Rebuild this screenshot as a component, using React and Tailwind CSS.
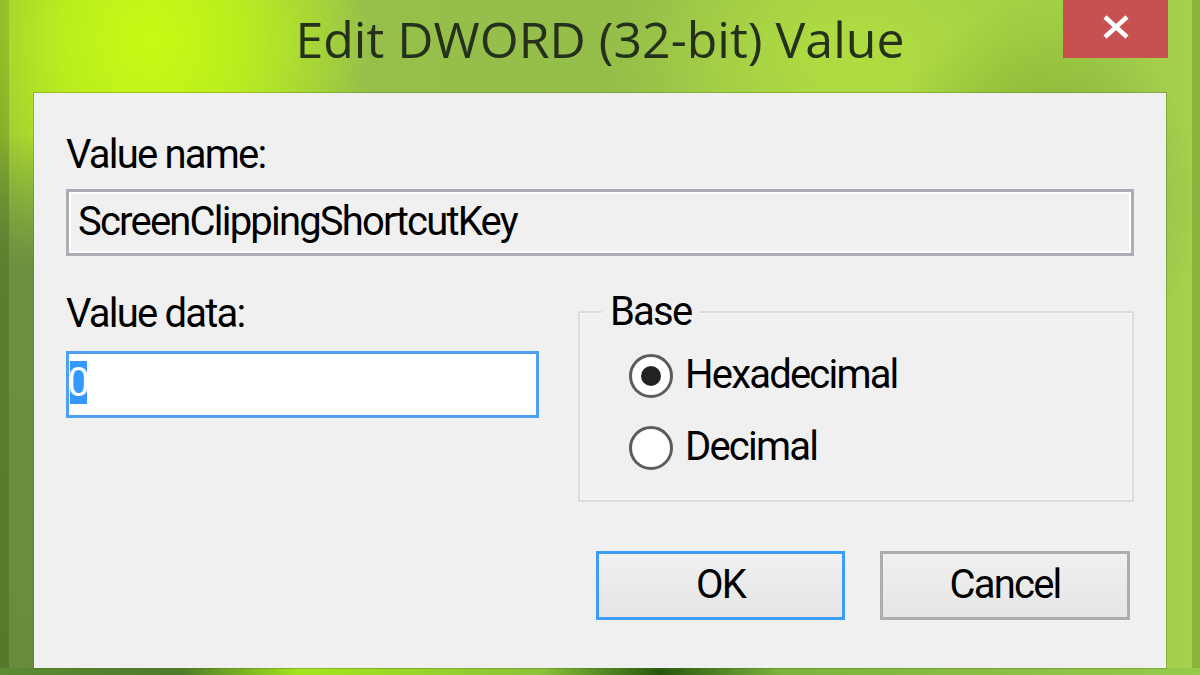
export default function App() {
  const titleFont = { fontFamily: '"Open Sans", "Noto Sans", sans-serif' };
  const bodyFont = { fontFamily: 'Roboto, "Noto Sans", sans-serif' };
  return (
    <div className="relative w-[1200px] h-[675px] overflow-hidden flex flex-col bg-[#9cc648]">
      {/* background layers */}
      <div className="absolute inset-0 bg-[radial-gradient(ellipse_220px_260px_at_150px_40px,#c8fa14_0%,#bdf01c_35%,rgba(160,210,60,0)_100%),radial-gradient(ellipse_160px_200px_at_1040px_200px,rgba(110,150,40,0.7)_0%,rgba(110,150,40,0)_100%),radial-gradient(ellipse_260px_160px_at_860px_60px,#b0dc40_0%,rgba(170,215,70,0)_100%),linear-gradient(90deg,#8fb640_0%,#a8d63c_10%,#96c04a_30%,#94bd4a_55%,#a6d048_70%,#9ccc48_85%,#a6d04e_100%)]" />
      <div className="absolute left-0 top-0 bottom-0 w-[34px] bg-[linear-gradient(180deg,rgba(0,0,0,0)_0%,rgba(0,0,0,0)_20%,#6a9040_40%,#678c3c_100%)]" />
      <div className="absolute left-0 top-0 bottom-0 w-[9px] bg-[linear-gradient(180deg,rgba(60,90,20,0.15)_0%,rgba(60,90,20,0.35)_40%,rgba(60,90,20,0.4)_100%)]" />
      <div className="absolute right-0 top-0 bottom-0 w-[8px] bg-[rgba(90,130,30,0.35)]" />
      <div className="absolute left-0 right-0 bottom-0 h-[7px] bg-[linear-gradient(90deg,#5e8a34_0%,#4e7a2a_15%,#a4e41c_25%,#8cc23a_45%,#25560e_55%,#7cb23c_65%,#98ca4a_100%)]" />

      {/* title bar */}
      <div className="relative h-[93px] flex items-start justify-center" style={titleFont}>
        <div className="mt-[8px] text-[50px] leading-[62px] text-[#25311c]">
          Edit DWORD (32-bit) Value
        </div>
        <div className="absolute top-0 left-[1063px] w-[105px] h-[58px] bg-[#c75050] flex items-center justify-center">
          <svg width="30" height="24" viewBox="0 0 30 24" className="-mt-[4px]">
            <path d="M4 2 L26 22 M26 2 L4 22" stroke="white" strokeWidth="4.5" fill="none" />
          </svg>
        </div>
      </div>

      {/* client area */}
      <div
        className="relative ml-[34px] w-[1132px] h-[575px] bg-[#f0f0f0] shadow-[0_0_0_1px_rgba(80,110,40,0.35)] pl-[32px] pt-[39px] text-black text-[40px] leading-[46px] tracking-[-1.8px]"
        style={bodyFont}
      >
        <div className="h-[46px]">Value name:</div>
        <div className="mt-[11px] w-[1068px] h-[67px] border-[3px] border-[#acacb4] shadow-[inset_0_0_0_2px_#ffffff] bg-[#f0f0f0] flex items-center pl-[9px]">
          <span className="-mt-[2px]">ScreenClippingShortcutKey</span>
        </div>

        <div className="flex mt-[35px]">
          <div className="flex flex-col">
            <div className="h-[46px]">Value data:</div>
            <div className="mt-[14px] w-[473px] h-[67px] border-[3px] border-[#4fa0f2] bg-white flex items-center pl-[1px]">
              <span className="h-[43px] w-[17px] bg-[#3399ff] text-white flex items-center justify-center -mt-[4px] tracking-normal">0</span>
            </div>
          </div>

          <div className="relative ml-[39px] mt-[20px] w-[556px] h-[191px] border-2 border-[#dcdcdc] shadow-[inset_0_0_0_1px_#f8f8f8]">
            <div className="absolute left-[22px] -top-[24px] px-[8px] bg-[#f0f0f0]">Base</div>
            <div className="flex flex-col pl-[49px] pt-[41px] gap-[28px]">
              <div className="flex items-center gap-[12px]">
                <div className="w-[44px] h-[44px] rounded-full border-[3px] border-[#5c5c5c] bg-white flex items-center justify-center shadow-[inset_0_0_0_2px_#ffffff]">
                  <div className="w-[20px] h-[20px] rounded-full bg-[#222222]" />
                </div>
                <span className="-mt-[2px]">Hexadecimal</span>
              </div>
              <div className="flex items-center gap-[12px]">
                <div className="w-[44px] h-[44px] rounded-full border-[3px] border-[#5c5c5c] bg-white" />
                <span className="-mt-[2px]">Decimal</span>
              </div>
            </div>
          </div>
        </div>

        <div className="flex ml-[530px] mt-[49px] gap-[35px]">
          <div className="w-[249px] h-[69px] border-[3px] border-[#3d9cf8] bg-[linear-gradient(180deg,#f0f0f0,#e5e5e5)] flex items-center justify-center">
            <span className="-mt-[2px]">OK</span>
          </div>
          <div className="w-[250px] h-[69px] border-[3px] border-[#adadad] bg-[linear-gradient(180deg,#f0f0f0,#e5e5e5)] flex items-center justify-center">
            <span className="-mt-[2px]">Cancel</span>
          </div>
        </div>
      </div>
    </div>
  );
}
